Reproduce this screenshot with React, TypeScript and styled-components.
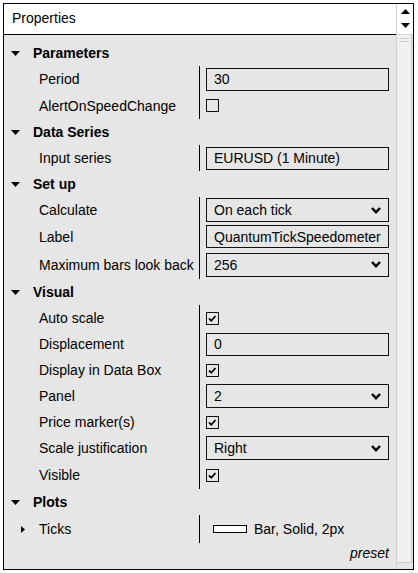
import React from "react";
import styled, { createGlobalStyle } from "styled-components";

const GlobalStyle = createGlobalStyle`
  html, body { margin: 0; padding: 0; background: #ffffff; }
  body { font-family: "Liberation Sans", Arial, sans-serif; color: #000; }
  * { box-sizing: border-box; }
`;

const Page = styled.div`
  padding: 3px 4px 3px 3px;
`;

const Frame = styled.div`
  width: 411px;
  height: 567px;
  border: 1px solid #000;
  display: flex;
  background: #e6e6e6;
`;

const Main = styled.div`
  flex: 1;
  display: flex;
  flex-direction: column;
  min-width: 0;
`;

const Header = styled.div`
  height: 31px;
  background: #fff;
  border-bottom: 1px solid #000;
  padding-left: 8px;
  font-size: 14px;
  line-height: 29px;
`;

const Content = styled.div`
  flex: 1;
  padding: 5px 7px 0 0;
  display: flex;
  flex-direction: column;
`;

const ScrollCol = styled.div`
  width: 17px;
  border-left: 1px solid #cfcfcf;
  display: flex;
  flex-direction: column;
`;

const Spinner = styled.div`
  height: 31px;
  background: #fff;
  border-bottom: 1px solid #d4d4d4;
  display: flex;
  flex-direction: column;
  align-items: center;
  justify-content: space-between;
  padding: 5px 0 6px 1px;
`;

const Track = styled.div`
  flex: 1;
  padding: 0 1px 6px 0;
  display: flex;
`;

const Thumb = styled.div`
  flex: 1;
  background: #f0f0f0;
  border-right: 1px solid #c8c8c8;
  border-bottom: 1px solid #c8c8c8;
  display: flex;
  flex-direction: column;
  align-items: center;
  gap: 2px;
  padding-top: 3px;
`;

const Grip = styled.div`
  width: 10px;
  height: 1px;
  background: #cdcdcd;
`;

const SectionHead = styled.div`
  height: 26px;
  display: flex;
  align-items: center;
  padding-left: 7px;
  font-size: 14px;
  font-weight: bold;
  gap: 13px;
`;

const Row = styled.div<{ $h: number }>`
  display: grid;
  grid-template-columns: 195px 1fr;
  height: ${(p) => p.$h}px;
`;

const Label = styled.div<{ $expander?: boolean }>`
  display: flex;
  align-items: center;
  padding-left: ${(p) => (p.$expander ? 17 : 35)}px;
  font-size: 14px;
  white-space: nowrap;
  gap: 14px;
`;

const Value = styled.div`
  border-left: 1px solid #000;
  padding-left: 6px;
  display: flex;
  align-items: center;
  font-size: 14px;
`;

const Box = styled.div<{ $select?: boolean }>`
  flex: 1;
  height: ${(p) => (p.$select ? 24 : 23)}px;
  border: 1px solid #111;
  display: flex;
  align-items: center;
  justify-content: space-between;
  padding: 0 7px 0 7px;
  font-size: 14px;
  white-space: nowrap;
  overflow: hidden;
`;

const Check = styled.div`
  width: 13px;
  height: 13px;
  border: 1px solid #111;
  display: flex;
  align-items: center;
  justify-content: center;
`;

const Swatch = styled.div`
  width: 34px;
  height: 8px;
  background: #fff;
  border: 1px solid #000;
  margin: 0 7px 0 7px;
`;

const Preset = styled.div`
  text-align: right;
  font-style: italic;
  font-size: 14px;
  line-height: 20px;
`;

const DownTri = () => (
  <svg width="9" height="5" viewBox="0 0 9 5">
    <polygon points="0,0 9,0 4.5,5" fill="#000" />
  </svg>
);

const RightTri = () => (
  <svg width="4" height="7" viewBox="0 0 4 7">
    <polygon points="0,0 4,3.5 0,7" fill="#000" />
  </svg>
);

const Chevron = () => (
  <svg width="10" height="7" viewBox="0 0 10 7">
    <polyline points="1,1 5,5.2 9,1" fill="none" stroke="#000" strokeWidth="2.4" />
  </svg>
);

const Tick = () => (
  <svg width="11" height="11" viewBox="0 0 11 11">
    <polyline points="2,5.5 4.3,7.8 8.5,3" fill="none" stroke="#000" strokeWidth="1.8" />
  </svg>
);

type Field = { label: string; h: number } & (
  | { kind: "text"; value: string }
  | { kind: "select"; value: string }
  | { kind: "check"; checked: boolean }
  | { kind: "plot"; value: string }
);

const sections: { title: string; fields: Field[] }[] = [
  {
    title: "Parameters",
    fields: [
      { kind: "text", label: "Period", value: "30", h: 26 },
      { kind: "check", label: "AlertOnSpeedChange", checked: false, h: 27 },
    ],
  },
  {
    title: "Data Series",
    fields: [{ kind: "text", label: "Input series", value: "EURUSD (1 Minute)", h: 26 }],
  },
  {
    title: "Set up",
    fields: [
      { kind: "select", label: "Calculate", value: "On each tick", h: 26 },
      { kind: "text", label: "Label", value: "QuantumTickSpeedometer", h: 27 },
      { kind: "select", label: "Maximum bars look back", value: "256", h: 29 },
    ],
  },
  {
    title: "Visual",
    fields: [
      { kind: "check", label: "Auto scale", checked: true, h: 26 },
      { kind: "text", label: "Displacement", value: "0", h: 26 },
      { kind: "check", label: "Display in Data Box", checked: true, h: 26 },
      { kind: "select", label: "Panel", value: "2", h: 26 },
      { kind: "check", label: "Price marker(s)", checked: true, h: 26 },
      { kind: "select", label: "Scale justification", value: "Right", h: 26 },
      { kind: "check", label: "Visible", checked: true, h: 28 },
    ],
  },
  {
    title: "Plots",
    fields: [{ kind: "plot", label: "Ticks", value: "Bar, Solid, 2px", h: 28 }],
  },
];

const FieldRow = ({ f }: { f: Field }) => (
  <Row $h={f.h}>
    <Label $expander={f.kind === "plot"}>
      {f.kind === "plot" && <RightTri />}
      <span>{f.label}</span>
    </Label>
    <Value>
      {f.kind === "text" && <Box>{f.value}</Box>}
      {f.kind === "select" && (
        <Box $select>
          <span>{f.value}</span>
          <Chevron />
        </Box>
      )}
      {f.kind === "check" && <Check>{f.checked && <Tick />}</Check>}
      {f.kind === "plot" && (
        <>
          <Swatch />
          <span>{f.value}</span>
        </>
      )}
    </Value>
  </Row>
);

export default function App() {
  return (
    <>
      <GlobalStyle />
      <Page>
        <Frame>
          <Main>
            <Header>Properties</Header>
            <Content>
              {sections.map((s) => (
                <React.Fragment key={s.title}>
                  <SectionHead>
                    <DownTri />
                    <span>{s.title}</span>
                  </SectionHead>
                  {s.fields.map((f) => (
                    <FieldRow key={f.label} f={f} />
                  ))}
                </React.Fragment>
              ))}
              <Preset>preset</Preset>
            </Content>
          </Main>
          <ScrollCol>
            <Spinner>
              <svg width="9" height="5" viewBox="0 0 9 5">
                <polygon points="0,5 9,5 4.5,0" fill="#000" />
              </svg>
              <svg width="9" height="5" viewBox="0 0 9 5">
                <polygon points="0,0 9,0 4.5,5" fill="#000" />
              </svg>
            </Spinner>
            <Track>
              <Thumb>
                <Grip />
                <Grip />
              </Thumb>
            </Track>
          </ScrollCol>
        </Frame>
      </Page>
    </>
  );
}
